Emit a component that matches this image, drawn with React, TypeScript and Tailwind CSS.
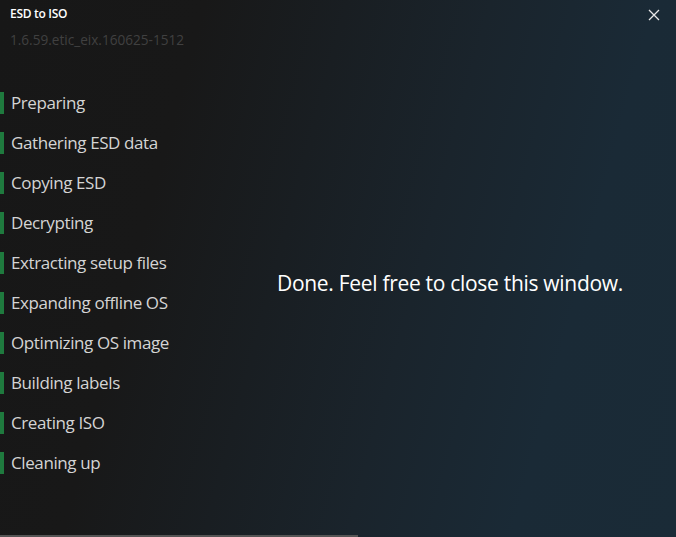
import React from "react";

const steps = [
  "Preparing",
  "Gathering ESD data",
  "Copying ESD",
  "Decrypting",
  "Extracting setup files",
  "Expanding offline OS",
  "Optimizing OS image",
  "Building labels",
  "Creating ISO",
  "Cleaning up",
];

export default function App() {
  return (
    <div
      className="w-[676px] h-[537px] flex flex-col overflow-hidden bg-[linear-gradient(105deg,#171717_0%,#181818_25%,#1a242c_60%,#1a2a36_80%,#1a2b37_100%)]"
      style={{ fontFamily: '"Open Sans", "Noto Sans", sans-serif' }}
    >
      <div className="flex justify-between items-start pl-[10px] pr-[16px] pt-[6px]">
        <div className="flex flex-col">
          <div className="text-[12px] leading-[16px] font-semibold text-white tracking-[-0.3px]">ESD to ISO</div>
          <div className="mt-[9px] text-[13.6px] leading-[18px] text-[#404040]">1.6.59.etic_eix.160625-1512</div>
        </div>
        <svg width="12" height="12" viewBox="0 0 12 12" className="mt-[3px]">
          <path d="M1 1 L11 11 M11 1 L1 11" stroke="#e8e8e8" strokeWidth="1.3" />
        </svg>
      </div>
      <div className="flex flex-1">
        <div className="flex flex-col gap-[18px] pt-[43px] w-[210px]">
          {steps.map((s) => (
            <div key={s} className="flex items-center h-[22px]">
              <div className="w-[4px] h-[22px] bg-[#1f7a3e]" />
              <div className="pl-[7px] text-[17px] leading-[22px] text-[#d4d4d4] tracking-[-0.4px] whitespace-nowrap">{s}</div>
            </div>
          ))}
        </div>
        <div className="flex-1 flex justify-center pt-[220px] pl-[14px]">
          <div className="text-[21px] leading-[28px] text-white tracking-[-0.3px] whitespace-nowrap">
            Done. Feel free to close this window.
          </div>
        </div>
      </div>
      <div className="h-[2px] w-[358px] bg-[#555555]" />
    </div>
  );
}
